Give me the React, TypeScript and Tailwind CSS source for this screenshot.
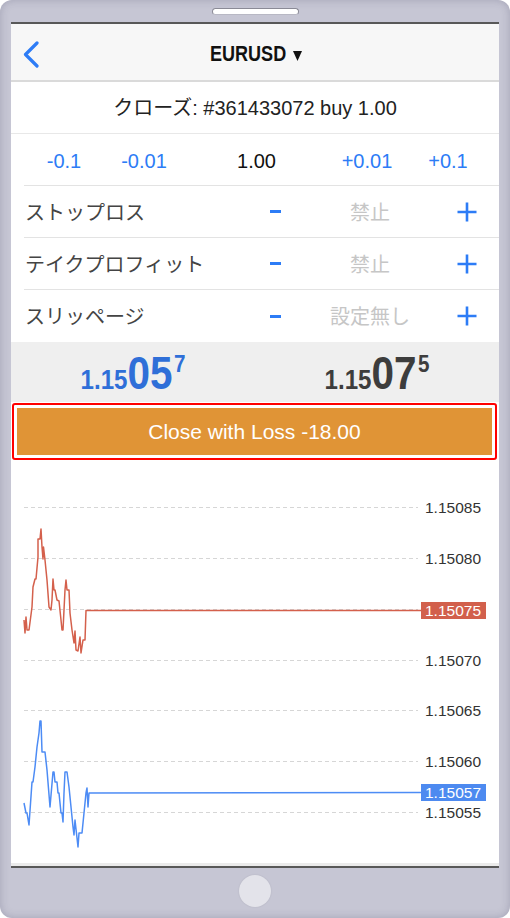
import React from "react";

const BLUE = "#2d7cf6";

const redPts =
  "13,158 14,171 15,155 16,168 18,168 21,145 22,125 24,117 25,117 27,95 27,77 29,77 30,67 31,85 32,97 32.5,85 34,98 36,118 38,145 40,148 41,138 42,117 43,128 44,128 46,138 48,139 50,158 51,168 52,168 54,128 55,118 56,128 58,128 59,151 61,168 63,181 64,169 65,188 67,189 69,175 70,191 72,178 74,178 75,148.5 410,148.5";

const bluePts =
  "13,341 15,351 16,351 18,363 21,320 22,320 24,305 26,285 28,271 29,259 30,259 31,290 34,290 36,308 39,345 42,310 43,310 44,320 46,320 47,331 48,331 50,351 51,351 52,360 53,331 54,310 56,310 58,325 60,345 62,365 63,373 64,358 66,376 67,385 68,371 71,371 73,351 75,331 76,326 77,345 78,331 410,330.5";

const gridYs = [45, 96, 147, 198, 248, 299, 350];
const gridLabels: [number, string][] = [
  [45, "1.15085"],
  [96, "1.15080"],
  [198, "1.15070"],
  [248, "1.15065"],
  [299, "1.15060"],
  [350, "1.15055"],
];

const SANS = "font-['Liberation_Sans','Noto_Sans_CJK_JP',sans-serif]";
const BOLD = "font-['Liberation_Sans',sans-serif] font-bold";

function Minus() {
  return <div className="h-[3px] w-[11px] bg-[#2d7cf6]" />;
}

function Plus() {
  return (
    <svg width="20" height="20" viewBox="0 0 20 20">
      <path d="M10 0.5V19.5M0.5 10H19.5" stroke={BLUE} strokeWidth="2.6" />
    </svg>
  );
}

function SettingRow({ label, value, last }: { label: string; value: string; last?: boolean }) {
  return (
    <div className={`ml-[13px] h-[52px] ${last ? "" : "border-b border-[#e3e3e3]"} grid grid-cols-[232px_38px_152px_41px_1fr] items-center`}>
      <div className="pl-[1px] text-[20px] leading-none text-[#444] font-['Noto_Sans_CJK_JP',sans-serif]">{label}</div>
      <div className="flex justify-center"><Minus /></div>
      <div className="text-center text-[20px] leading-none text-[#c6c6c6] font-['Noto_Sans_CJK_JP',sans-serif]">{value}</div>
      <div className="flex justify-center"><Plus /></div>
      <div />
    </div>
  );
}

function Price({ a, b, c, color }: { a: string; b: string; c: string; color: string }) {
  return (
    <div className={`flex items-baseline ${BOLD} [transform:scaleX(0.86)]`} style={{ color }}>
      <span className="text-[28px] leading-none">{a}</span>
      <span className="text-[47px] leading-none">{b}</span>
      <span className="self-start text-[24px] leading-none mt-[3px] ml-[2px]">{c}</span>
    </div>
  );
}

export default function App() {
  return (
    <div className="w-[510px] h-[918px] bg-[#c6c6d4] rounded-[12px] shadow-[inset_0_0_8px_rgba(60,60,90,0.25)] flex flex-col items-center">
      <div className="mt-[8px] h-[7px] w-[87px] rounded-full bg-white border border-[#8a8a96] border-b-[#b8b8c4]" />
      <div className="mt-[7px] w-[488px] bg-white border-t-2 border-[#585858] flex flex-col">
        {/* header */}
        <div className="h-[58px] bg-[#f7f7f7] border-b-2 border-[#dadada] relative flex items-center justify-center">
          <svg className="absolute left-[12px] top-[17px]" width="16" height="27" viewBox="0 0 16 27">
            <path d="M14 2L2.5 13.5L14 25" fill="none" stroke={BLUE} strokeWidth="3.2" strokeLinecap="round" strokeLinejoin="round" />
          </svg>
          <div className="flex items-center gap-[8px] mt-[5px] ml-[1px]">
            <div className="w-[75px]">
              <span className={`inline-block ${BOLD} text-[22px] leading-none text-[#111] origin-left [transform:scaleX(0.82)]`}>EURUSD</span>
            </div>
            <svg width="9" height="11" viewBox="0 0 9 11" className="mt-[1px]">
              <path d="M0 1H9L4.5 11Z" fill="#111" />
            </svg>
          </div>
        </div>
        {/* close row */}
        <div className={`h-[52px] border-b border-[#e8e8e8] flex items-center justify-center ${SANS} text-[20px] leading-none text-[#222]`}>
          クローズ: #361433072 buy 1.00
        </div>
        {/* lots row */}
        <div className={`ml-[13px] h-[52px] pt-[3px] border-b border-[#e3e3e3] grid grid-cols-[80px_80px_145px_76px_86px] items-center ${SANS} text-[20px] leading-none`}>
          <div className="text-center text-[#2d7cf6]">-0.1</div>
          <div className="text-center text-[#2d7cf6]">-0.01</div>
          <div className="text-center text-[#111]">1.00</div>
          <div className="text-center text-[#2d7cf6]">+0.01</div>
          <div className="text-center text-[#2d7cf6]">+0.1</div>
        </div>
        <SettingRow label="ストップロス" value="禁止" />
        <SettingRow label="テイクプロフィット" value="禁止" />
        <SettingRow label="スリッページ" value="設定無し" last />
        {/* prices */}
        <div className="h-[60px] bg-[#efefef] grid grid-cols-2 items-center">
          <div className="flex justify-center pl-[1px]">
            <Price a="1.15" b="05" c="7" color="#2f6fd8" />
          </div>
          <div className="flex justify-center">
            <Price a="1.15" b="07" c="5" color="#3d3d3d" />
          </div>
        </div>
        {/* button */}
        <div className="h-[60px] pt-[1px] pl-[1px]">
          <div className="w-[485px] h-[57px] border-2 border-[#ff0000] rounded-[3px] p-[3px]">
            <div className={`h-full bg-[#e09436] flex items-center justify-center text-white ${SANS} text-[21px] leading-none`}>
              Close with Loss -18.00
            </div>
          </div>
        </div>
        {/* chart */}
        <div className="h-[401px] relative">
          <svg className="absolute left-0 top-0" width="488" height="401" viewBox="0 0 488 401">
            {gridYs.map((y) => (
              <line key={y} x1="13" x2="407" y1={y + 0.5} y2={y + 0.5} stroke="#d6d6d6" strokeWidth="1" strokeDasharray="4 3" />
            ))}
            <polyline points={redPts} fill="none" stroke="#d4604c" strokeWidth="1.5" strokeLinejoin="round" />
            <polyline points={bluePts} fill="none" stroke="#4d8cf5" strokeWidth="1.5" strokeLinejoin="round" />
          </svg>
          {gridLabels.map(([y, t]) => (
            <div key={t} className={`absolute left-[414px] ${SANS} text-[15.5px] leading-[17px] text-[#333]`} style={{ top: y - 8 }}>
              {t}
            </div>
          ))}
          <div className={`absolute left-[410px] top-[140px] w-[65px] h-[17px] bg-[#d2604c] text-white pl-[4px] ${SANS} text-[15.5px] leading-[17px]`}>
            1.15075
          </div>
          <div className={`absolute left-[410px] top-[322px] w-[65px] h-[17px] bg-[#4d8af0] text-white pl-[4px] ${SANS} text-[15.5px] leading-[17px]`}>
            1.15057
          </div>
        </div>
        <div className="h-[3px] bg-[#ebebeb] border-b-2 border-[#585858] box-content" />
      </div>
      <div className="pt-[7px]">
        <div className="w-[32px] h-[32px] rounded-full bg-[#e3e3ea] shadow-[0_0_2px_rgba(0,0,0,0.1)]" />
      </div>
    </div>
  );
}
